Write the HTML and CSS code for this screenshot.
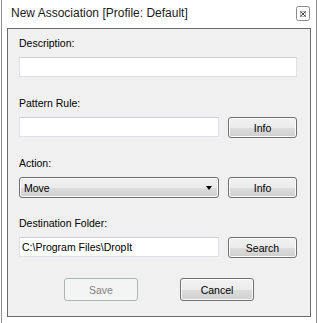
FILE: index.html
```html
<!DOCTYPE html>
<html lang="en">
<head>
  <meta charset="UTF-8">
  <title>New Association</title>
  <link rel="stylesheet" href="styles.css">
</head>
<body>
  <div class="dlg">
    <div class="dlg-title">
      <span class="dlg-caption">New Association [Profile: Default]</span>
      <span class="dlg-close">
        <svg width="14" height="15" viewBox="0 0 14 15">
          <rect x="0.5" y="0.5" width="13" height="14" rx="2" fill="#fff" stroke="#8a8a8a"/>
          <rect x="4.5" y="5.5" width="5" height="5" fill="none" stroke="#b0b0b0"/>
          <path d="M4.5 5.5 L9.5 10.5 M9.5 5.5 L4.5 10.5" stroke="#444" stroke-width="1"/>
        </svg>
      </span>
    </div>

    <div class="dlg-panel">
      <div class="field">
        <div class="field-label">Description:</div>
        <input type="text" class="textbox textbox-wide">
      </div>

      <div class="field">
        <div class="field-label">Pattern Rule:</div>
        <div class="field-row">
          <input type="text" class="textbox">
          <button type="button" class="btn btn-side">Info</button>
        </div>
      </div>

      <div class="field">
        <div class="field-label">Action:</div>
        <div class="field-row">
          <div class="combo">
            <span>Move</span>
            <span class="combo-arrow"></span>
          </div>
          <button type="button" class="btn btn-side">Info</button>
        </div>
      </div>

      <div class="field">
        <div class="field-label">Destination Folder:</div>
        <div class="field-row">
          <input type="text" class="textbox" value="C:\Program Files\DropIt">
          <button type="button" class="btn btn-side">Search</button>
        </div>
      </div>

      <div class="dlg-actions">
        <button type="button" class="btn btn-main" disabled>Save</button>
        <button type="button" class="btn btn-main">Cancel</button>
      </div>
    </div>
  </div>
</body>
</html>
```

FILE: styles.css
```css
body {
  margin: 0;
  background: #ffffff;
  font-family: "Liberation Sans", Arial, sans-serif;
  font-size: 10.5px;
  color: #000000;
}

.dlg {
  box-sizing: border-box;
  width: 316px;
  min-height: 323px;
  margin-left: 1px;
  padding: 0 5px;
  border-left: 1px solid #8e8e8e;
  border-right: 1px solid #8e8e8e;
}

.dlg-title {
  display: flex;
  align-items: center;
  justify-content: space-between;
  box-sizing: border-box;
  height: 28px;
  padding: 0 1px 2px 4px;
}

.dlg-caption {
  font-size: 12px;
  color: #1a1a1a;
}

.dlg-close {
  display: flex;
}

.dlg-panel {
  box-sizing: border-box;
  height: 289px;
  padding: 6px 13px 0 11px;
  border: 1px solid #6a6a6a;
  background: #f0f0f0;
}

.field {
  margin-bottom: 18px;
}

.field-label {
  height: 16px;
  line-height: 16px;
  margin-bottom: 6px;
}

.field-row {
  display: flex;
  align-items: flex-start;
  gap: 9px;
  height: 20px;
}

.textbox {
  box-sizing: border-box;
  width: 200px;
  height: 20px;
  margin: 0;
  padding: 0 2px;
  border: 1px solid #dde1e5;
  border-top-color: #cdd0d4;
  background: #ffffff;
  font: inherit;
  color: #000000;
  outline: none;
}

.textbox-wide {
  display: block;
  width: 278px;
}

.btn {
  box-sizing: border-box;
  margin: 0;
  padding: 0;
  border: 1px solid #707070;
  border-radius: 3px;
  background: linear-gradient(#f2f2f2 0%, #ebebeb 50%, #dddddd 51%, #cfcfcf 100%);
  box-shadow: inset 0 0 0 1px #fbfbfb;
  font: inherit;
  color: #000000;
}

.btn-side {
  flex: none;
  width: 69px;
  height: 21px;
}

.btn-main {
  width: 74px;
  height: 23px;
}

.btn:disabled {
  border-color: #adb2b5;
  background: #f4f4f4;
  box-shadow: none;
  color: #838383;
}

.combo {
  display: flex;
  align-items: center;
  justify-content: space-between;
  flex: none;
  box-sizing: border-box;
  width: 200px;
  height: 21px;
  padding: 0 6px 0 4px;
  border: 1px solid #707070;
  border-radius: 3px;
  background: linear-gradient(#f2f2f2 0%, #ebebeb 50%, #dddddd 51%, #cfcfcf 100%);
  box-shadow: inset 0 0 0 1px #fbfbfb;
}

.combo-arrow {
  width: 0;
  height: 0;
  border-left: 3.5px solid transparent;
  border-right: 3.5px solid transparent;
  border-top: 4px solid #000000;
}

.dlg-actions {
  display: flex;
  gap: 42px;
  margin-top: 21px;
  padding-left: 45px;
}
```
